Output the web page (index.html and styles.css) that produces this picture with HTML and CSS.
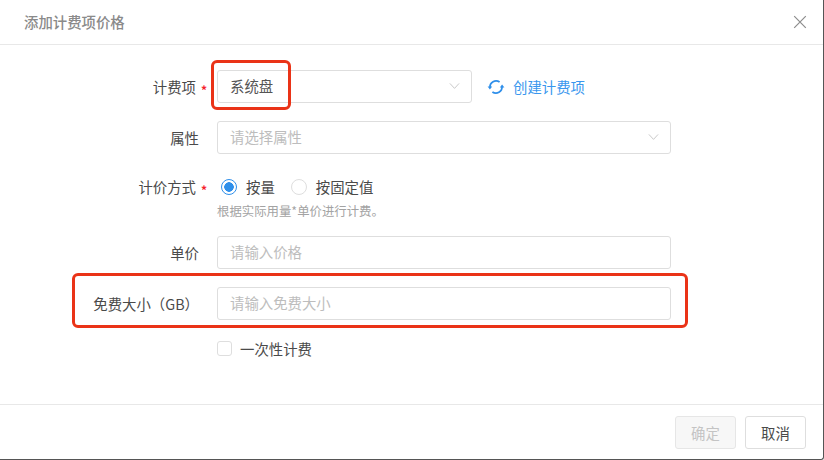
FILE: index.html
```html
<!DOCTYPE html>
<html lang="zh-CN">
<head>
<meta charset="utf-8">
<title>添加计费项价格</title>
<link rel="stylesheet" href="styles.css">
</head>
<body>
<div class="dialog">
  <header class="dialog-header">
    <h1 class="dialog-title">添加计费项价格</h1>
    <svg class="close-icon" viewBox="0 0 14 14" aria-hidden="true"><path d="M1.2 1.2 12.8 12.8M12.8 1.2 1.2 12.8"/></svg>
  </header>
  <form class="dialog-body">
    <div class="row">
      <label class="label required">计费项<span class="star">*</span></label>
      <div class="field select short">
        <span class="value">系统盘</span>
        <svg class="chevron" viewBox="0 0 12 8" aria-hidden="true"><path d="M1 1.2 6 6.6 11 1.2"/></svg>
      </div>
      <a class="create-link">
        <svg class="sync-icon" viewBox="0 0 18 18" aria-hidden="true">
          <path class="arc" d="M3 9.6A6.1 6.1 0 0 1 12.6 4.1"/>
          <path class="arc" d="M15 8.4A6.1 6.1 0 0 1 5.4 13.9"/>
          <path class="head" d="M.6 8.4H5.2L2.9 11.4Z"/>
          <path class="head" d="M17.4 9.6H12.8L15.1 6.6Z"/>
        </svg>
        <span>创建计费项</span>
      </a>
    </div>
    <div class="row">
      <label class="label">属性</label>
      <div class="field select">
        <span class="placeholder">请选择属性</span>
        <svg class="chevron" viewBox="0 0 12 8" aria-hidden="true"><path d="M1 1.2 6 6.6 11 1.2"/></svg>
      </div>
    </div>
    <div class="row row-radio">
      <label class="label required">计价方式<span class="star">*</span></label>
      <div class="radio-group">
        <span class="radio checked"></span><span class="radio-text">按量</span>
        <span class="radio"></span><span class="radio-text">按固定值</span>
      </div>
    </div>
    <p class="help">根据实际用量*单价进行计费。</p>
    <div class="row">
      <label class="label">单价</label>
      <div class="field"><span class="placeholder">请输入价格</span></div>
    </div>
    <div class="row">
      <label class="label">免费大小（GB）</label>
      <div class="field"><span class="placeholder">请输入免费大小</span></div>
    </div>
    <div class="check-row">
      <span class="checkbox"></span><span class="check-text">一次性计费</span>
    </div>
  </form>
  <footer class="dialog-footer">
    <button type="button" class="btn disabled">确定</button>
    <button type="button" class="btn">取消</button>
  </footer>
  <div class="mark mark-select"></div>
  <div class="mark mark-free"></div>
</div>
</body>
</html>
```
FILE: styles.css
```css
* { box-sizing: border-box; }
html, body { margin: 0; padding: 0; background: #fff; }
body {
  font-family: "Noto Sans CJK SC", "Liberation Sans", sans-serif;
  font-size: 14.4px;
  color: #333;
}
.dialog {
  position: relative;
  width: 824px;
  height: 460px;
  display: flex;
  flex-direction: column;
  background: #fff;
  border-right: 1px solid #555;
  border-bottom: 1px solid #555;
  border-bottom-right-radius: 3px;
  overflow: hidden;
}
.dialog-header {
  height: 45px;
  flex: none;
  display: flex;
  align-items: center;
  justify-content: space-between;
  padding: 0 16px 1px 24px;
  border-bottom: 1px solid #e8e8e8;
}
.dialog-title { margin: 0; font-size: 14.4px; font-weight: 500; color: #8a8a8a; }
.close-icon { width: 14px; height: 14px; fill: none; stroke: #8c8c8c; stroke-width: 1.2; }
.dialog-body { flex: 1; margin: 0; padding: 25px 0 0; }
.row { display: flex; align-items: center; height: 33px; margin-bottom: 18px; }
.row-radio { margin-top: -2px; margin-bottom: 0; }
.label {
  width: 199px;
  flex: none;
  margin-right: 18px;
  text-align: right;
  white-space: nowrap;
  color: #4a4a4a;
}
.label.required { position: relative; padding-right: 3px; }
.star { position: absolute; left: 201px; top: 5px; color: #f5222d; font-size: 12px; font-weight: 700; }
.field {
  width: 453.5px;
  height: 33px;
  display: flex;
  align-items: center;
  justify-content: space-between;
  padding: 0 11px 2px 12px;
  border: 1px solid #dedede;
  border-radius: 3px;
  background: #fff;
}
.field.short { width: 255px; }
.value { color: #555; }
.placeholder { color: #bdbdbd; }
.chevron { width: 11px; height: 8px; fill: none; stroke: #c4c4c4; stroke-width: 1; }
.create-link { display: flex; align-items: center; margin-left: 15px; color: #3a97ee; }
.sync-icon { width: 18px; height: 18px; margin-right: 8px; }
.arc { fill: none; stroke: #2f8fea; stroke-width: 1.8; }
.head { fill: #2f8fea; }
.radio-group { display: flex; align-items: center; padding-left: 4px; }
.radio {
  width: 16px;
  height: 16px;
  flex: none;
  border: 1px solid #dedede;
  border-radius: 50%;
  background: #fff;
}
.radio.checked {
  border-color: #2f8fea;
  background: radial-gradient(circle, #2f8fea 0 4.5px, #fff 5px);
}
.radio-text { margin-left: 9px; margin-right: 16px; color: #4a4a4a; }
.help { margin: 0 0 17px 217px; height: 16px; line-height: 16px; font-size: 12.4px; color: #a3a3a3; }
.check-row { display: flex; align-items: center; height: 20px; margin: 0 0 0 217px; }
.checkbox {
  width: 15px;
  height: 15px;
  border: 1px solid #dedede;
  border-radius: 3px;
  background: #fff;
}
.check-text { margin-left: 8px; color: #4a4a4a; }
.dialog-footer {
  height: 55px;
  flex: none;
  display: flex;
  justify-content: flex-end;
  gap: 9px;
  padding: 11px 17px 0 0;
  border-top: 1px solid #e8e8e8;
}
.btn {
  width: 61px;
  height: 33px;
  padding: 0;
  font: inherit;
  color: #4a4a4a;
  background: #fff;
  border: 1px solid #dedede;
  border-radius: 3px;
}
.btn.disabled { color: #c4c4c4; background: #f7f7f7; border-color: #e6e6e6; }
.mark { position: absolute; border: 3px solid #ea3317; border-radius: 6px; pointer-events: none; }
.mark-select { left: 211px; top: 60px; width: 80px; height: 50px; }
.mark-free { left: 72px; top: 273px; width: 616px; height: 55px; }
```
